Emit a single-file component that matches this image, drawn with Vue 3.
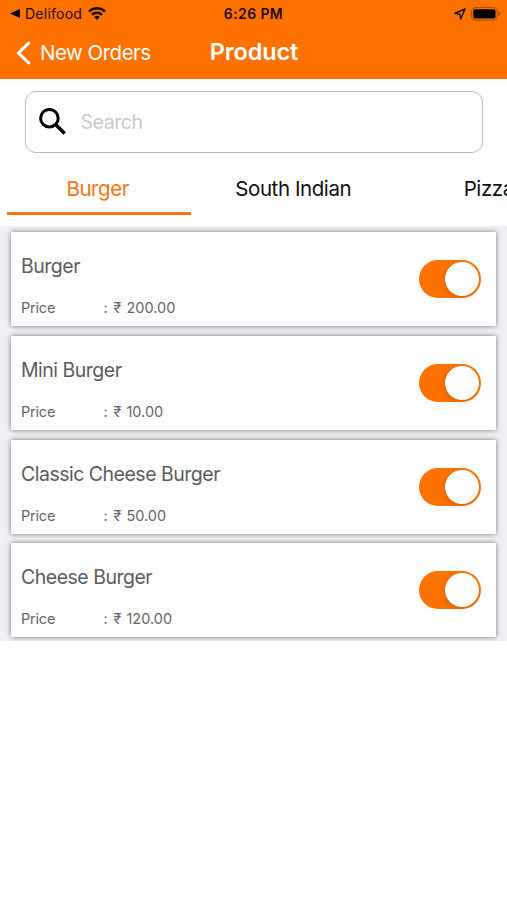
<script setup>
import { ref } from 'vue'

const categories = ['Burger', 'South Indian', 'Pizza']
const active = ref('Burger')
const products = ref([
  { name: 'Burger', price: '200.00', on: true },
  { name: 'Mini Burger', price: '10.00', on: true },
  { name: 'Classic Cheese Burger', price: '50.00', on: true },
  { name: 'Cheese Burger', price: '120.00', on: true },
])
</script>

<template>
  <div class="screen">
    <header class="header">
      <div class="status">
        <div class="status-left">
          <svg class="back-app" viewBox="0 0 10 9"><path d="M0 4.5 10 0v9z" /></svg>
          <span class="app-name">Delifood</span>
          <svg class="wifi" viewBox="0 0 18 13" fill="none" stroke="#1a0b00" stroke-width="2.5">
            <path d="M1 4.6a11.5 11.5 0 0 1 16 0" />
            <path d="M4 7.8a7.2 7.2 0 0 1 10 0" />
            <path d="M9 13 6.2 10.1a4 4 0 0 1 5.6 0z" fill="#1a0b00" stroke="none" />
          </svg>
        </div>
        <span class="time">6:26 PM</span>
        <div class="status-right">
          <svg class="location" viewBox="0 0 12 12" fill="none" stroke="#1a0b00" stroke-width="1.5" stroke-linejoin="round">
            <path d="M11 1 1 5.3l4.8.9.9 4.8z" />
          </svg>
          <svg class="battery" viewBox="0 0 30 14">
            <rect x=".6" y=".6" width="25.6" height="12.6" rx="3.5" fill="none" stroke="#a84b00" />
            <rect x="2.3" y="2.3" width="22.2" height="9.2" rx="1.8" />
            <path d="M27.7 4.6c2 .7 2 4 0 4.7z" fill="#a84b00" />
          </svg>
        </div>
      </div>
      <nav class="nav">
        <button class="back">
          <svg class="chevron" viewBox="0 0 15 24" fill="none" stroke="#fff" stroke-width="3.1" stroke-linecap="round" stroke-linejoin="round">
            <path d="M12.7 2.2 2.4 12l10.3 9.9" />
          </svg>
          <span>New Orders</span>
        </button>
        <h1 class="title">Product</h1>
        <span></span>
      </nav>
    </header>

    <label class="search">
      <svg class="search-icon" viewBox="0 0 27 27" fill="none" stroke="#000">
        <circle cx="10.4" cy="10.2" r="8.8" stroke-width="3" />
        <path d="m16.4 16.2 9.3 9.3" stroke-width="3.6" />
      </svg>
      <input class="search-input" type="text" placeholder="Search" />
    </label>

    <div class="tabs">
      <button
        v-for="c in categories"
        :key="c"
        class="tab"
        :class="{ active: c === active }"
        @click="active = c"
      ><span>{{ c }}</span></button>
    </div>

    <main class="list">
      <article v-for="p in products" :key="p.name" class="card">
        <div class="info">
          <h2 class="name">{{ p.name }}</h2>
          <div class="price">
            <span class="label">Price</span>
            <span class="colon">:</span>
            <span class="amount">₹ {{ p.price }}</span>
          </div>
        </div>
        <button class="switch" :class="{ on: p.on }" @click="p.on = !p.on">
          <span class="knob"></span>
        </button>
      </article>
    </main>
  </div>
</template>

<style>
body {
  margin: 0;
  background: #fff;
}
</style>

<style scoped>
.screen {
  width: 507px;
  height: 900px;
  overflow: hidden;
  background: #fff;
  font-family: Inter, "Liberation Sans", sans-serif;
}
.screen * {
  box-sizing: border-box;
}
button {
  padding: 0;
  border: 0;
  background: none;
  font: inherit;
}
.header {
  height: 79px;
  background: #ff7200;
}
.status {
  height: 27px;
  display: grid;
  grid-template-columns: 1fr auto 1fr;
  align-items: center;
  color: #1a0b00;
}
.status-left {
  display: flex;
  align-items: center;
  padding-left: 10px;
}
.back-app {
  width: 10px;
  height: 9px;
}
.app-name {
  margin-left: 5px;
  width: 58px;
  font-size: 14px;
  letter-spacing: 0.25px;
  white-space: nowrap;
}
.wifi {
  width: 18px;
  height: 13px;
  margin-left: 5px;
}
.time {
  font-size: 14px;
  font-weight: 600;
  letter-spacing: 0.4px;
}
.status-right {
  display: flex;
  justify-content: flex-end;
  align-items: center;
  padding-right: 6px;
}
.location {
  width: 12px;
  height: 12px;
  margin-right: 5px;
}
.battery {
  width: 30px;
  height: 14px;
}
.nav {
  height: 50px;
  display: grid;
  grid-template-columns: 1fr auto 1fr;
  align-items: center;
  color: #fff;
}
.back {
  display: flex;
  align-items: center;
  padding: 1px 0 0 16px;
  color: #fff;
  font-size: 20.5px;
  letter-spacing: -0.5px;
  white-space: nowrap;
}
.chevron {
  width: 15px;
  height: 24px;
  margin-right: 9px;
}
.title {
  margin: 0;
  padding-left: 1px;
  font-size: 23.5px;
  font-weight: 600;
  line-height: 28px;
  letter-spacing: -0.1px;
}
.search {
  display: flex;
  align-items: center;
  width: 458px;
  height: 62px;
  margin: 12px 0 0 25px;
  padding-left: 13px;
  border: 1px solid #bdbdbd;
  border-radius: 11px;
}
.search-icon {
  width: 27px;
  height: 27px;
  margin-bottom: 1px;
}
.search-input {
  width: 380px;
  margin-left: 14.5px;
  padding: 0;
  border: 0;
  outline: 0;
  background: none;
  font: 19.5px Inter, sans-serif;
  letter-spacing: -0.45px;
}
.search-input::placeholder {
  color: #c9c9c9;
  opacity: 1;
}
.tabs {
  display: flex;
  gap: 12px;
  height: 73px;
  padding-left: 7px;
  overflow: hidden;
}
.tab {
  flex: 0 0 183.5px;
  height: 62px;
  padding: 12px 2px 0 0;
  border-bottom: 3px solid transparent;
  color: #111;
  font-size: 20.5px;
  letter-spacing: -0.42px;
}
.tab.active {
  color: #f87412;
  border-bottom-color: #f87412;
}
.list {
  display: flex;
  flex-direction: column;
  gap: 9.8px;
  height: 415px;
  padding: 6px 11px 0;
  background: #efeff4;
}
.card {
  display: flex;
  justify-content: space-between;
  flex: 0 0 94px;
  padding: 0 15px 0 10px;
  background: #fff;
  box-shadow: 0 0 5px rgba(0, 0, 0, 0.5);
}
.info {
  padding-top: 21px;
}
.name {
  margin: 0;
  color: #5c5c5c;
  font-size: 19.5px;
  font-weight: 400;
  line-height: 26px;
  letter-spacing: -0.5px;
}
.price {
  display: flex;
  margin-top: 19px;
  color: #666;
  font-size: 14.5px;
  line-height: 20px;
}
.label {
  width: 82.5px;
  letter-spacing: -0.2px;
}
.colon {
  width: 10px;
}
.amount {
  word-spacing: 1px;
}
.switch {
  display: flex;
  align-items: center;
  align-self: center;
  width: 62.5px;
  height: 38px;
  padding: 2px;
  border-radius: 19px;
  background: #ddd;
}
.switch.on {
  justify-content: flex-end;
  background: #ff7200;
}
.knob {
  width: 34px;
  height: 34px;
  border-radius: 50%;
  background: #fff;
  box-shadow: -1px 2px 5px rgba(0, 0, 0, 0.16);
}
</style>
